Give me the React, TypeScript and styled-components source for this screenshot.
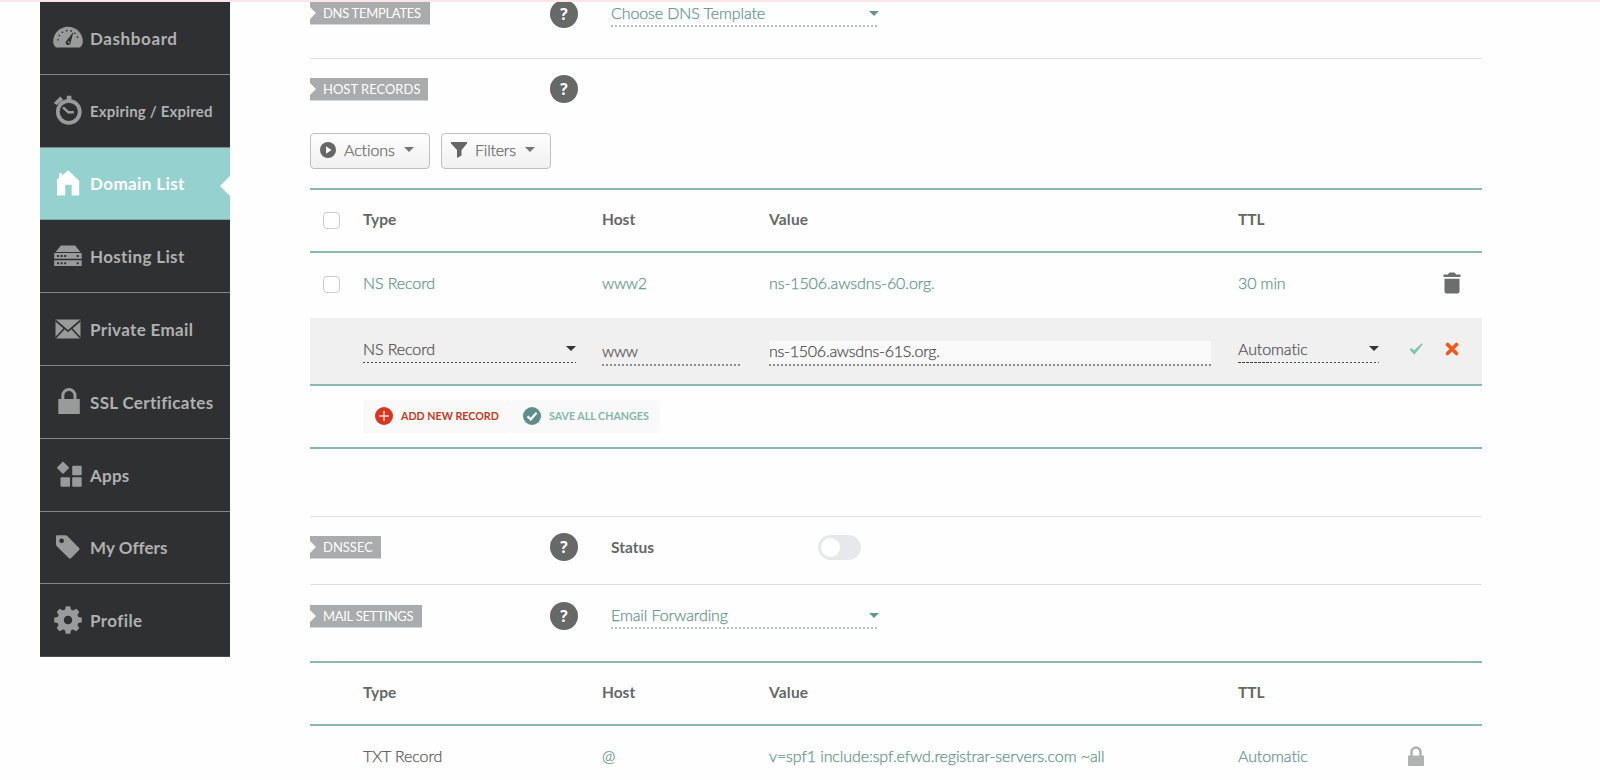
import React from "react";
import styled, { createGlobalStyle, css } from "styled-components";

const GlobalStyle = createGlobalStyle`
  * { box-sizing: border-box; }
  body {
    margin: 0;
    background: #fefefe;
    font-family: Lato, "Open Sans", sans-serif;
    font-size: 16px;
    color: #5a5b5b;
    overflow: hidden;
  }
`;

const teal = "#64968a";
const line = "#8bb8b3";
const ink = "#505050";

const Page = styled.div`
  height: 780px;
  display: flex;
  align-items: flex-start;
  border-top: 2px solid #fde6e9;
  overflow: hidden;
`;

/* ---------- Sidebar ---------- */

const Sidebar = styled.nav`
  width: 190px;
  margin-left: 40px;
  flex: none;
`;

const NavItem = styled.a<{ $active?: boolean }>`
  position: relative;
  display: flex;
  align-items: center;
  height: 72.8px;
  padding-left: 13px;
  background: ${(p) => (p.$active ? "#95d1ce" : "#2e3031")};
  border-bottom: 1px solid ${(p) => (p.$active ? "#7ba5a4" : "#858787")};
  color: ${(p) => (p.$active ? "#fff" : "#b0b1b1")};
  &:last-child { border-bottom-color: #4c4e4f; }
  svg {
    flex: none;
    margin-top: -1px;
    color: ${(p) => (p.$active ? "#fff" : "#999b9b")};
  }
  ${(p) =>
    p.$active &&
    css`
      &::after {
        content: "";
        position: absolute;
        right: 0;
        top: 28px;
        border: solid transparent;
        border-width: 10px 10px 10px 0;
        border-right-color: #fefefe;
      }
    `}
`;

const NavLabel = styled.span<{ $ls: number; $size?: number }>`
  margin-left: 7px;
  padding-top: ${(p) => (p.$size ? 0 : 2)}px;
  font-size: ${(p) => p.$size ?? 17}px;
  font-weight: 700;
  line-height: 20px;
  white-space: nowrap;
  letter-spacing: ${(p) => p.$ls}px;
`;

const dark = "#2e3031";

const NavIcon = ({ children }: { children: React.ReactNode }) => (
  <svg width="30" height="30" viewBox="0 0 30 30" fill="currentColor">
    {children}
  </svg>
);

const icons: Record<string, React.ReactNode> = {
  dashboard: (
    <>
      <path d="M3 25.5C1.2 24 .2 21.800 .2 19.500 .2 11.500 6.800 4.800 15 4.800S29.800 11.500 29.800 19.500C29.800 21.800 28.800 24 27 25.500Z" />
      <path d="M5 18.500A10 10 0 0 1 25 18.500" fill="none" stroke={dark} strokeWidth="1.500" strokeDasharray="1.500 3" />
      <path d="M20.500 9.800 17.600 20.800A2.500 2.500 0 1 1 13.600 18.500Z" fill={dark} />
      <circle cx="15.600" cy="20.200" r=".9" />
    </>
  ),
  clock: (
    <>
      <circle cx="15.800" cy="16.800" r="11" fill="none" stroke="currentColor" strokeWidth="3.800" />
      <path d="M13.800 .8h4.600v4h-4.600zM.8 8 7.200 1.400l3 3.200-6.500 5.400z" />
      <path d="M10 12.300 15.300 17.200h5.500" fill="none" stroke="currentColor" strokeWidth="2.500" />
    </>
  ),
  home: (
    <path d="M6 5.200h3v2.300L15.300 2.300 26.200 13v14.500h-7.500V16.800h-6.500v10.700H4V12.500L3.500 12 6 9.800Z" />
  ),
  server: (
    <>
      <path d="M8 4.500h14l5.500 6.500h-25z" />
      <path d="M1.200 12h27.500v5.700H1.200zM1.200 19.300h27.500V25H1.200z" />
      <path d="M4 14.900h10.500M4 22.200h10.500" stroke={dark} strokeWidth="2" strokeDasharray="2 1.600" />
      <path d="M23.700 14.900h2M23.700 22.200h2" stroke={dark} strokeWidth="2" />
    </>
  ),
  mail: (
    <>
      <path d="M2.500 5.500h25v19h-25z" />
      <path d="M2.500 6.500 15 17.200 27.500 6.500M2.500 24 11.300 14.500M27.500 24 18.700 14.500" fill="none" stroke={dark} strokeWidth="1.700" />
    </>
  ),
  lock: (
    <>
      <path d="M5.300 13h21.500v15H5.300z" />
      <path d="M9.800 14V9.500a6 6 0 0 1 12.200 0V14" fill="none" stroke="currentColor" strokeWidth="3" />
    </>
  ),
  apps: (
    <>
      <rect x="5.500" y="4.200" width="9" height="9" rx=".8" transform="rotate(45 10 8.700)" />
      <rect x="19.200" y="6.800" width="9.500" height="9.500" rx="1" />
      <rect x="7.500" y="18.300" width="9.500" height="9.500" rx="1" />
      <rect x="19.200" y="18.300" width="9.500" height="9.500" rx="1" />
    </>
  ),
  tag: (
    <path
      fillRule="evenodd"
      d="M4 3.200H12.500Q13.500 3.200 14.300 4L26.300 16.200Q27 17 26.300 17.800L18 26.300Q17 27.200 16 26.300L4 14.500Q3 13.500 3 12.500V4.200Q3 3.200 4 3.200ZM8.600 6.400a2.400 2.400 0 1 0 0 4.800 2.400 2.400 0 0 0 0-4.800Z"
    />
  ),
  gear: (
    <>
      <circle cx="15" cy="15" r="7.500" fill="none" stroke="currentColor" strokeWidth="6.500" />
      {[0, 45, 90, 135, 180, 225, 270, 315].map((a) => (
        <path key={a} d="M11.800 6 12.600 1.700Q12.700 1.200 13.300 1.200h3.400q.6 0 .7.500L18.200 6z" transform={`rotate(${a} 15 15)`} />
      ))}
    </>
  ),
};

const nav = [
  { icon: "dashboard", label: "Dashboard", ls: 0.6 },
  { icon: "clock", label: "Expiring / Expired", ls: 0.17, size: 15 },
  { icon: "home", label: "Domain List", ls: 0.4, active: true },
  { icon: "server", label: "Hosting List", ls: 0.35 },
  { icon: "mail", label: "Private Email", ls: 0.35 },
  { icon: "lock", label: "SSL Certificates", ls: 0.33 },
  { icon: "apps", label: "Apps", ls: 0.25 },
  { icon: "tag", label: "My Offers", ls: 0.05 },
  { icon: "gear", label: "Profile", ls: 0.4 },
];

/* ---------- Content ---------- */

const Content = styled.main`
  width: 1171.5px;
  margin-left: 80px;
  flex: none;
`;

const Section = styled.section<{ $h: number; $top: number; $rule?: boolean }>`
  display: flex;
  align-items: flex-start;
  height: ${(p) => p.$h}px;
  padding-top: ${(p) => p.$top}px;
  border-bottom: ${(p) => (p.$rule ? "1px solid #dedfdf" : "none")};
`;

/* The first section is scrolled slightly under the top edge. */
const ScrolledSection = styled(Section)`
  & > * { margin-top: -2px; }
  & > :first-child { margin-top: -3px; }
`;

const TagCell = styled.div`
  width: 240px;
  height: 28px;
  display: flex;
  align-items: center;
`;

const Tag = styled.h2<{ $w: number; $ls?: number }>`
  margin: 0;
  width: ${(p) => p.$w}px;
  height: 23px;
  padding-left: 13px;
  font-size: 13px;
  font-weight: 400;
  line-height: 22px;
  white-space: nowrap;
  letter-spacing: ${(p) => p.$ls ?? 0}px;
  color: #fff;
  background: #a9abac;
  clip-path: polygon(0 0, 100% 0, 100% 100%, 0 100%, 0 76%, 6px 50%, 0 24%);
`;

const Help = styled.span`
  width: 28px;
  height: 28px;
  border-radius: 50%;
  background: #676868;
  color: #fff;
  font: 700 15.5px/28px "Open Sans", sans-serif;
  text-align: center;
`;

const Select = styled.div<{ $w: number; $dark?: boolean }>`
  display: flex;
  align-items: center;
  justify-content: space-between;
  width: ${(p) => p.$w}px;
  height: 27px;
  padding-bottom: 1px;
  color: ${(p) => (p.$dark ? ink : teal)};
  background: repeating-linear-gradient(
      90deg,
      ${(p) => (p.$dark ? "#444" : "#afc2bd")} 0 2.5px,
      transparent 2.5px 4px
    )
    0 100% / 100% ${(p) => (p.$dark ? 1 : 2)}px no-repeat;
`;

const SectionSelect = styled(Select)`
  margin-left: 33px;
`;

const Caret = styled.i<{ $color: string }>`
  border: solid transparent;
  border-width: 5.5px 5.500px 0;
  border-top-color: ${(p) => p.$color};
`;

const Text = styled.span<{ $ls?: number; $bold?: boolean; $color?: string }>`
  white-space: nowrap;
  line-height: 20px;
  font-size: ${(p) => (p.$bold ? 15.5 : 16)}px;
  font-weight: ${(p) => (p.$bold ? 700 : 300)};
  -webkit-text-stroke: ${(p) => (p.$bold ? 0 : 0.25)}px currentColor;
  letter-spacing: ${(p) => p.$ls ?? (p.$bold ? 0 : -0.1)}px;
  color: ${(p) => (p.$bold ? "#666767" : p.$color ?? "inherit")};
`;

const StatusLabel = styled(Text)`
  width: 207px;
  margin: 4px 0 0 33px;
`;

const Toggle = styled.span`
  width: 43px;
  height: 25px;
  margin-top: 2px;
  padding: 3px;
  border-radius: 13px;
  background: #e6e8e9;
  &::before {
    content: "";
    display: block;
    width: 19px;
    height: 19px;
    border-radius: 50%;
    background: #fff;
  }
`;

const Toolbar = styled.div`
  display: flex;
  gap: 11px;
  height: 55px;
`;

const ToolButton = styled.button<{ $w: number }>`
  display: flex;
  align-items: center;
  width: ${(p) => p.$w}px;
  height: 36px;
  padding: 0 0 3px 9px;
  border: 1px solid #bfc0c0;
  border-radius: 4px;
  background: linear-gradient(#fefefe, #f0f0f0);
  font-family: inherit;
  color: #666;
  svg { margin-right: 8px; }
  i { margin-left: 9px; }
`;

const Table = styled.div`
  border-top: 2px solid ${line};
`;

const Row = styled.div<{ $h: number; $pb?: number; $rule?: boolean; $edit?: boolean }>`
  display: grid;
  grid-template-columns: 53px 239px 167px 469px 150px 55px 18px;
  align-items: center;
  height: ${(p) => p.$h}px;
  padding-bottom: ${(p) => p.$pb ?? 0}px;
  border-bottom: ${(p) => (p.$rule ? `2px solid ${line}` : "none")};
  background: ${(p) => (p.$edit ? "#f0f0f0" : "transparent")};
  & > svg { justify-self: center; }
`;

const Checkbox = styled.span`
  width: 17px;
  height: 17px;
  margin: 2px 0 0 13px;
  border: 1.500px solid #ccc;
  border-radius: 4px;
  background: #fff;
`;

const Input = styled.div<{ $w: number; $fill?: boolean }>`
  width: ${(p) => p.$w}px;
  height: 25px;
  margin-top: 8px;
  padding-bottom: 4px;
  display: flex;
  align-items: center;
  color: ${ink};
  background: repeating-linear-gradient(90deg, #8b8c8c 0 2.500px, transparent 2.500px 4px) 0 100% / 100% 2px no-repeat,
    linear-gradient(${(p) => (p.$fill ? "#fafafa, #fafafa" : "transparent, transparent")}) 0 0 / 100% 23px no-repeat;
`;

const FooterRow = styled.div`
  display: flex;
  align-items: center;
  height: 63px;
  padding: 0 0 1px 53px;
  border-bottom: 2px solid ${line};
`;

const FooterButton = styled.button<{ $w: number; $color: string }>`
  display: flex;
  align-items: center;
  gap: 8px;
  width: ${(p) => p.$w}px;
  height: 33px;
  padding: 0 0 0 12px;
  border: 0;
  border-radius: 3px;
  background: #f9f9f9;
  color: ${(p) => p.$color};
  font: 700 10.700px/14px Lato, sans-serif;
  white-space: nowrap;
`;

const Spacer = styled.div`
  height: 68px;
  border-bottom: 1px solid #dedfdf;
`;

const App = () => (
  <>
    <GlobalStyle />
    <Page>
      <Sidebar>
        {nav.map((n) => (
          <NavItem key={n.label} $active={n.active}>
            <NavIcon>{icons[n.icon]}</NavIcon>
            <NavLabel $ls={n.ls} $size={n.size}>{n.label}</NavLabel>
          </NavItem>
        ))}
      </Sidebar>

      <Content>
        <ScrolledSection $h={57} $top={0} $rule>
          <TagCell>
            <Tag $w={120} $ls={-0.3}>DNS TEMPLATES</Tag>
          </TagCell>
          <Help>?</Help>
          <SectionSelect $w={268}>
            <Text>Choose DNS Template</Text>
            <Caret $color={teal} />
          </SectionSelect>
        </ScrolledSection>

        <Section $h={74} $top={16}>
          <TagCell>
            <Tag $w={118}>HOST RECORDS</Tag>
          </TagCell>
          <Help>?</Help>
        </Section>

        <Toolbar>
          <ToolButton $w={120}>
            <svg width="16" height="16" viewBox="0 0 16 16">
              <circle cx="8" cy="8" r="8" fill="#666" />
              <path d="M6 4.300 11.500 8 6 11.700z" fill="#fff" />
            </svg>
            <Text>Actions</Text>
            <Caret $color="#747575" />
          </ToolButton>
          <ToolButton $w={110}>
            <svg width="16" height="16" viewBox="0 0 16 16">
              <path d="M0 0h16v1.500L10.500 8v5.500L6 16V8L0 1.500z" fill="#666" />
            </svg>
            <Text $ls={-0.2}>Filters</Text>
            <Caret $color="#747575" />
          </ToolButton>
        </Toolbar>

        <Table>
          <Row $h={63} $pb={3} $rule>
            <Checkbox />
            <Text $bold>Type</Text>
            <Text $bold>Host</Text>
            <Text $bold $ls={0.2}>Value</Text>
            <Text $bold>TTL</Text>
          </Row>
          <Row $h={65} $pb={5}>
            <Checkbox />
            <Text $color={teal}>NS Record</Text>
            <Text $color={teal} $ls={-0.3}>www2</Text>
            <Text $color={teal}>ns-1506.awsdns-60.org.</Text>
            <Text $color={teal}>30 min</Text>
            <span />
            <svg width="18" height="22" viewBox="0 0 18 22" fill="#6c6d6d">
              <path d="M.5 2.500H5Q5.500.5 7 .5h4q1.500 0 2 2h4.500V5H.5zM1.500 6.800h15V19.500q0 2-2 2h-11q-2 0-2-2z" />
            </svg>
          </Row>
          <Row $h={68} $pb={4} $rule $edit>
            <span />
            <Select $w={213} $dark>
              <Text>NS Record</Text>
              <Caret $color="#333" />
            </Select>
            <Input $w={140}>
              <Text $ls={-0.3}>www</Text>
            </Input>
            <Input $w={442} $fill>
              <Text $ls={-0.25}>ns-1506.awsdns-61S.org.</Text>
            </Input>
            <Select $w={141} $dark>
              <Text>Automatic</Text>
              <Caret $color="#333" />
            </Select>
            <svg width="14" height="12" viewBox="0 0 14 12">
              <path d="M.5 6.500 2.500 5 5 7.500 12.500 .5 13.800 1.200 5.300 11.800Z" fill="#7dc5ac" />
            </svg>
            <svg width="14" height="14" viewBox="0 0 14 14">
              <path d="M2.500 2.500 11.500 11.500M11.500 2.500 2.500 11.500" stroke="#f4571b" strokeWidth="3.600" strokeLinecap="round" />
            </svg>
          </Row>
          <FooterRow>
            <FooterButton $w={148} $color="#c8391f">
              <svg width="18" height="18" viewBox="0 0 18 18">
                <circle cx="9" cy="9" r="9" fill="#da3520" />
                <path d="M9 4v10M4 9h10" stroke="#fbd5cf" strokeWidth="1.600" />
              </svg>
              ADD NEW RECORD
            </FooterButton>
            <FooterButton $w={149} $color="#84b8aa">
              <svg width="18" height="18" viewBox="0 0 18 18">
                <circle cx="9" cy="9" r="9" fill="#5f8e8c" />
                <path d="M4.500 9.300 7.800 12.300 13.500 5.800" fill="none" stroke="#fff" strokeWidth="2.300" />
              </svg>
              SAVE ALL CHANGES
            </FooterButton>
          </FooterRow>
        </Table>

        <Spacer />

        <Section $h={68} $top={16} $rule>
          <TagCell>
            <Tag $w={71}>DNSSEC</Tag>
          </TagCell>
          <Help>?</Help>
          <StatusLabel $bold>Status</StatusLabel>
          <Toggle />
        </Section>

        <Section $h={76} $top={17}>
          <TagCell>
            <Tag $w={112} $ls={-0.3}>MAIL SETTINGS</Tag>
          </TagCell>
          <Help>?</Help>
          <SectionSelect $w={268}>
            <Text>Email Forwarding</Text>
            <Caret $color="#5f9a8c" />
          </SectionSelect>
        </Section>

        <Table>
          <Row $h={63} $pb={4} $rule>
            <span />
            <Text $bold>Type</Text>
            <Text $bold>Host</Text>
            <Text $bold $ls={0.2}>Value</Text>
            <Text $bold>TTL</Text>
          </Row>
          <Row $h={60} $pb={1}>
            <span />
            <Text>TXT Record</Text>
            <Text $color={teal}>@</Text>
            <Text $color={teal}>v=spf1 include:spf.efwd.registrar-servers.com ~all</Text>
            <Text $color={teal}>Automatic</Text>
            <svg width="16" height="20" viewBox="0 0 16 20">
              <path d="M0 9.500h16V19q0 1-1 1H1q-1 0-1-1z" fill="#b1b2b2" />
              <path d="M3.500 10V6a4.500 4.500 0 0 1 9 0v4" fill="none" stroke="#b1b2b2" strokeWidth="2.600" />
            </svg>
          </Row>
        </Table>
      </Content>
    </Page>
  </>
);

export default App;
